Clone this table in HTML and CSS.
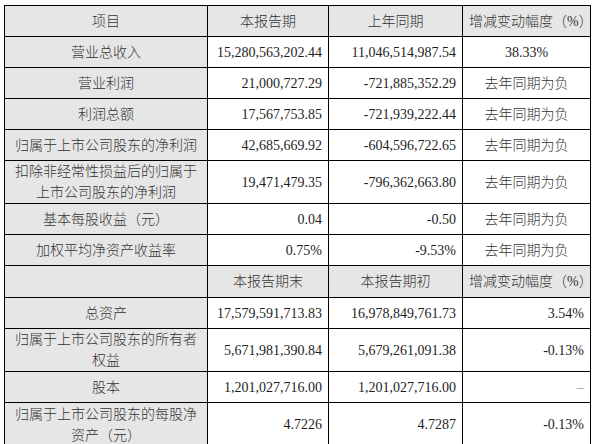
FILE: index.html
```html
<!DOCTYPE html>
<html>
<head>
	<meta charset="utf-8">
	<title>主要财务数据</title>
	<link rel="stylesheet" href="styles.css">
</head>
<body>
	<table class="report">
		<colgroup>
			<col class="c-label">
			<col class="c-cur">
			<col class="c-prev">
			<col class="c-chg">
		</colgroup>
		<tr class="head">
			<td>项目</td>
			<td>本报告期</td>
			<td>上年同期</td>
			<td>增减变动幅度（%）</td>
		</tr>
		<tr>
			<td class="label">营业总收入</td>
			<td class="num">15,280,563,202.44</td>
			<td class="num">11,046,514,987.54</td>
			<td class="mid">38.33%</td>
		</tr>
		<tr>
			<td class="label">营业利润</td>
			<td class="num">21,000,727.29</td>
			<td class="num">-721,885,352.29</td>
			<td class="mid cn">去年同期为负</td>
		</tr>
		<tr>
			<td class="label">利润总额</td>
			<td class="num">17,567,753.85</td>
			<td class="num">-721,939,222.44</td>
			<td class="mid cn">去年同期为负</td>
		</tr>
		<tr class="short">
			<td class="label">归属于上市公司股东的净利润</td>
			<td class="num">42,685,669.92</td>
			<td class="num">-604,596,722.65</td>
			<td class="mid cn">去年同期为负</td>
		</tr>
		<tr class="tall">
			<td class="label">扣除非经常性损益后的归属于<br>上市公司股东的净利润</td>
			<td class="num">19,471,479.35</td>
			<td class="num">-796,362,663.80</td>
			<td class="mid cn">去年同期为负</td>
		</tr>
		<tr>
			<td class="label">基本每股收益（元）</td>
			<td class="num">0.04</td>
			<td class="num">-0.50</td>
			<td class="mid cn">去年同期为负</td>
		</tr>
		<tr class="short">
			<td class="label">加权平均净资产收益率</td>
			<td class="num">0.75%</td>
			<td class="num">-9.53%</td>
			<td class="mid cn">去年同期为负</td>
		</tr>
		<tr class="head sub">
			<td></td>
			<td>本报告期末</td>
			<td>本报告期初</td>
			<td>增减变动幅度（%）</td>
		</tr>
		<tr class="short">
			<td class="label">总资产</td>
			<td class="num">17,579,591,713.83</td>
			<td class="num">16,978,849,761.73</td>
			<td class="num">3.54%</td>
		</tr>
		<tr class="tall">
			<td class="label">归属于上市公司股东的所有者<br>权益</td>
			<td class="num">5,671,981,390.84</td>
			<td class="num">5,679,261,091.38</td>
			<td class="num">-0.13%</td>
		</tr>
		<tr class="short">
			<td class="label">股本</td>
			<td class="num">1,201,027,716.00</td>
			<td class="num">1,201,027,716.00</td>
			<td class="num dash">–</td>
		</tr>
		<tr class="last">
			<td class="label">归属于上市公司股东的每股净<br>资产（元）</td>
			<td class="num">4.7226</td>
			<td class="num">4.7287</td>
			<td class="num">-0.13%</td>
		</tr>
	</table>
</body>
</html>
```

FILE: styles.css
```css
html{background: #fff;}
body{margin: 5px 0 0 4px; font-family: "Liberation Serif", "Noto Sans CJK SC", serif; font-size: 14px; color: #1e1e1e;}
.report{border-collapse: collapse; table-layout: fixed; width: 587px;}
.c-label{width: 203px;}
.c-cur{width: 121px;}
.c-prev{width: 134px;}
.c-chg{width: 128px;}
.report td{border: 1px solid #000; padding: 0 6px; line-height: 21px; height: 30px; white-space: nowrap;}
.report tr{height: 31px;}
.report tr.short{height: 30px;}
.report tr.tall{height: 43px;}
.report tr.sub{height: 32px;}
.report tr.last{height: 44px;}
.head td{background: #e6e6e6; text-align: center; color: #333; font-weight: 300;}
.label{background: #e6e6e6; text-align: center; color: #333; font-weight: 300;}
.cn{color: #333; font-weight: 300;}
.num{text-align: right;}
.mid{text-align: center;}
.dash{color: #999;}
```
